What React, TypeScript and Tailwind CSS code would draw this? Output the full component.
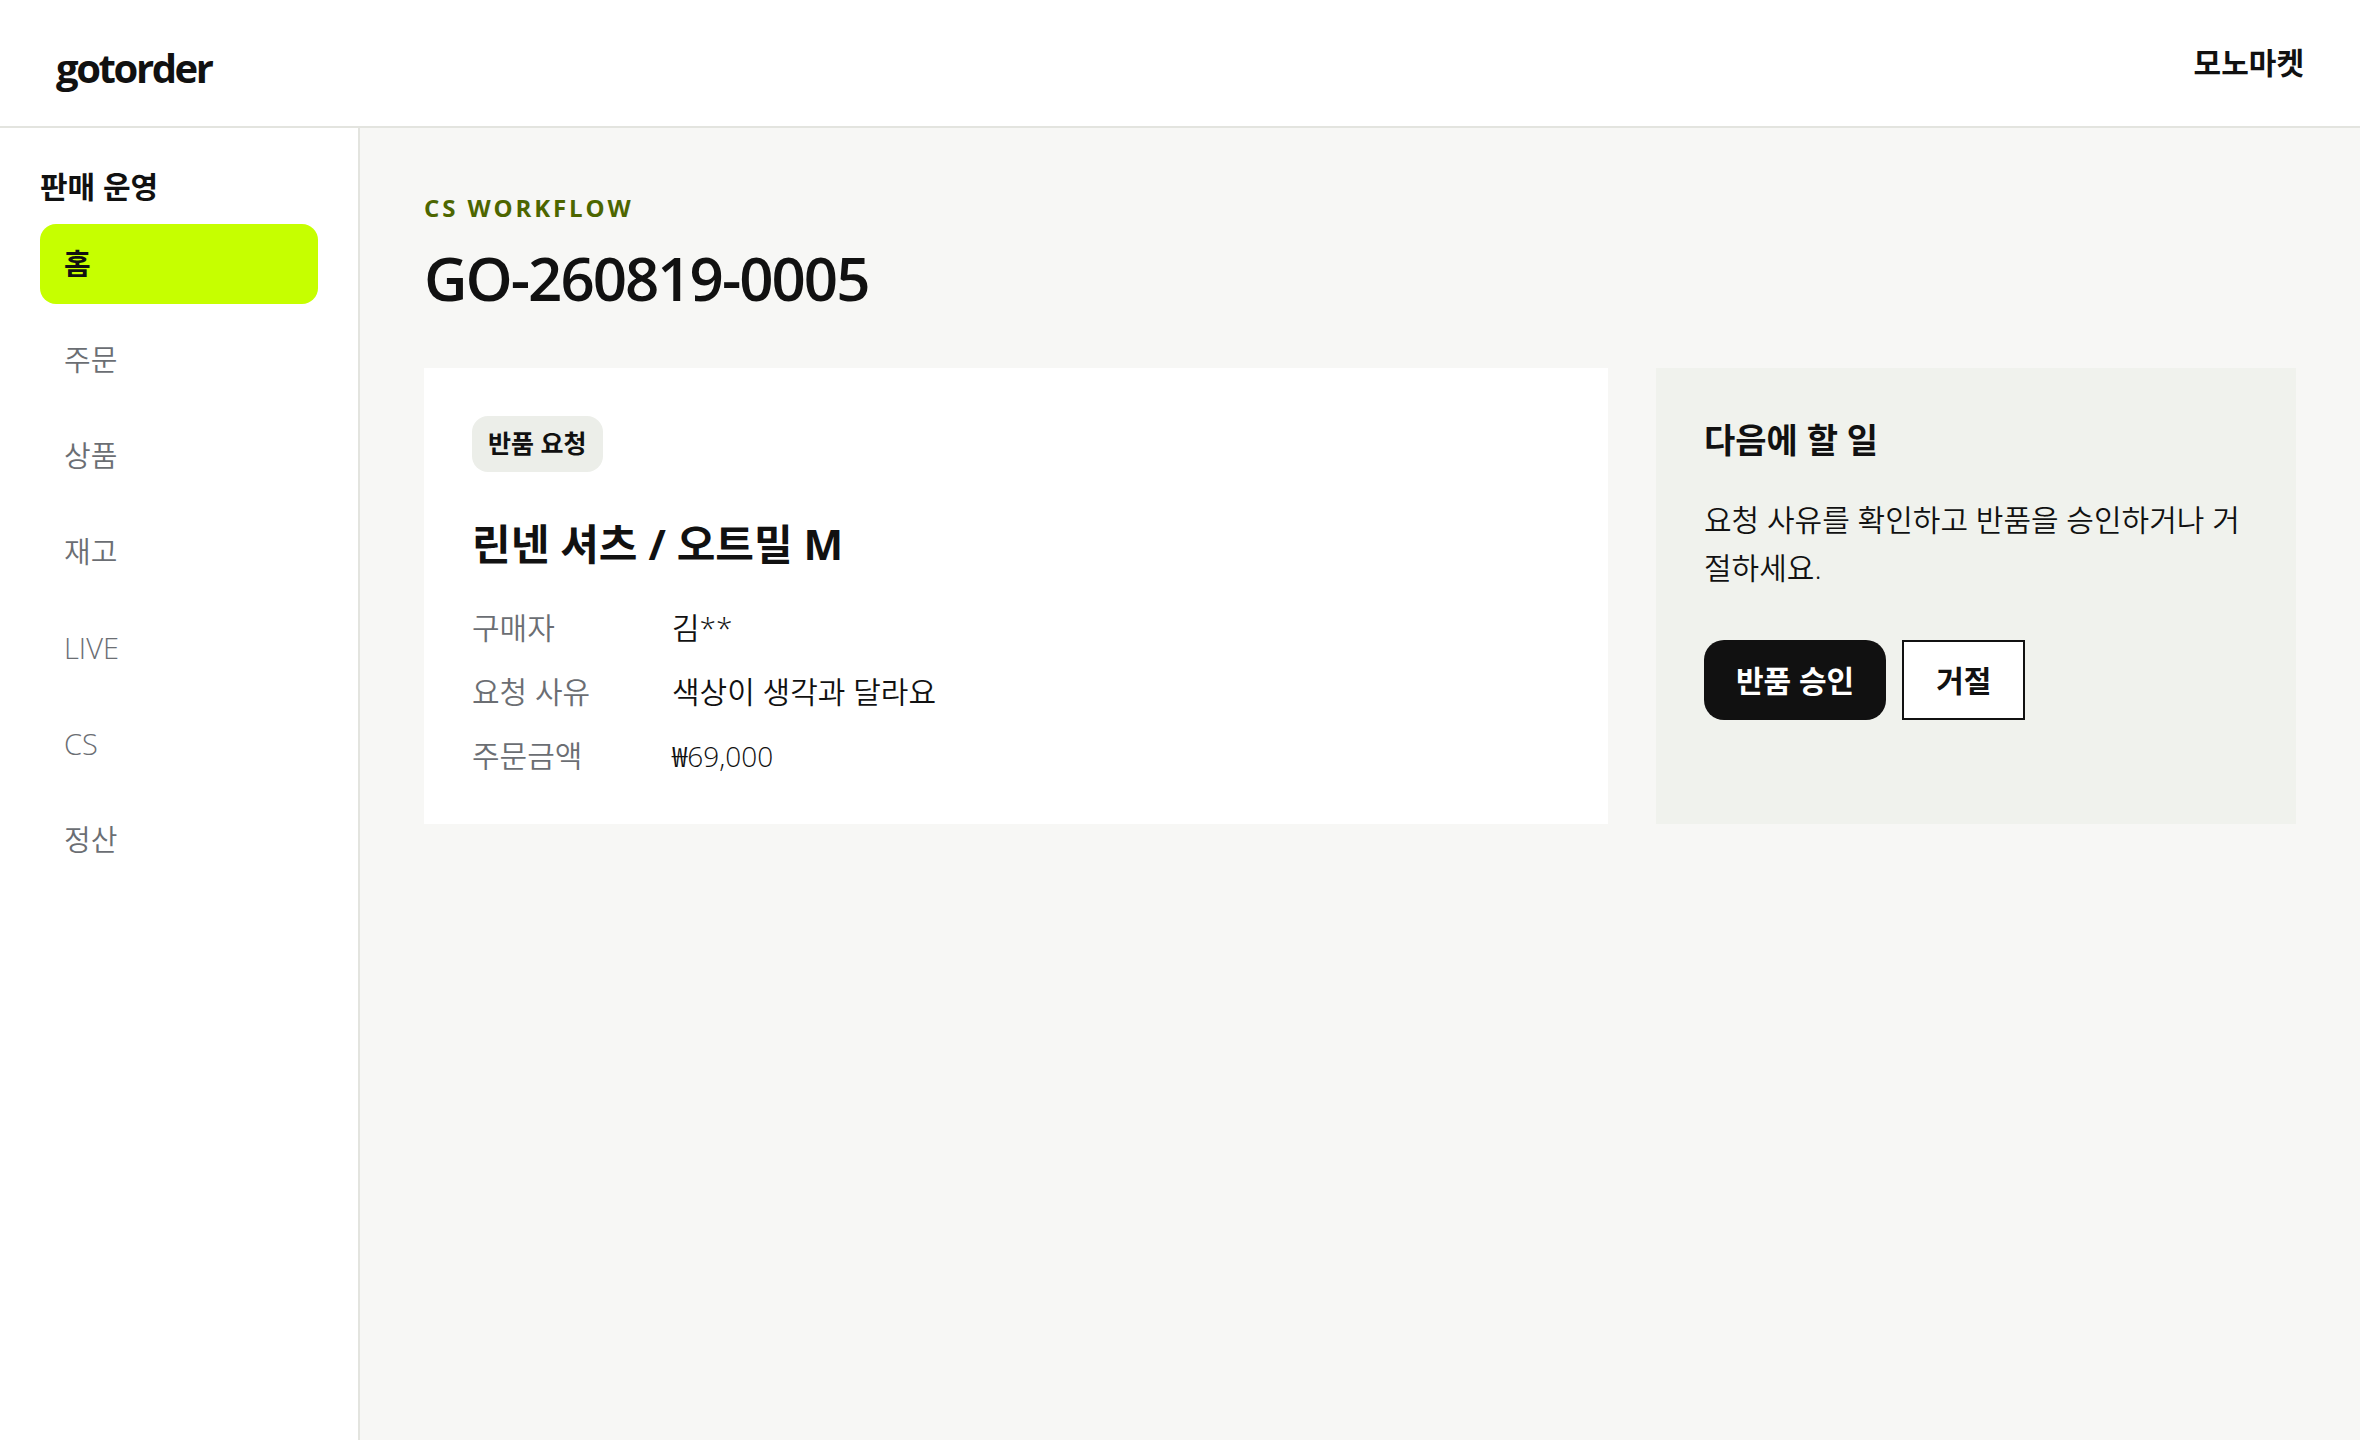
const navItems = ["홈", "주문", "상품", "재고", "LIVE", "CS", "정산"];

const details = [
  { label: "구매자", value: "김**" },
  { label: "요청 사유", value: "색상이 생각과 달라요" },
  { label: "주문금액", value: "₩69,000", numeric: true },
];

function Header() {
  return (
    <header className="flex h-32 items-center justify-between border-b-2 border-[#e3e4df] bg-white px-14">
      <a href="#" className="pt-2.5 text-[40px] leading-12 font-bold tracking-[-0.06em]">
        gotorder
      </a>
      <strong className="text-[30px] leading-10 font-bold">모노마켓</strong>
    </header>
  );
}

function Sidebar() {
  return (
    <aside className="w-[360px] shrink-0 border-r-2 border-[#e3e4df] bg-white px-10 pt-10">
      <strong className="block text-[30px] leading-9.5 font-bold">판매 운영</strong>
      <nav className="mt-4.5 flex flex-col gap-4">
        {navItems.map((item, index) => (
          <a
            key={item}
            href="#"
            aria-current={index === 0 ? "page" : undefined}
            className={
              index === 0
                ? "flex h-20 items-center rounded-2xl bg-[#c6ff00] px-6 text-[29px] leading-10 font-bold"
                : "flex h-20 items-center rounded-2xl px-6 text-[29px] leading-10 font-[350] text-[#6b6e73]"
            }
          >
            {item}
          </a>
        ))}
      </nav>
    </aside>
  );
}

function RequestCard() {
  return (
    <section className="bg-white p-12">
      <span className="inline-flex h-14 items-center rounded-2xl bg-[#eceee9] px-4 text-[25px] font-bold">
        반품 요청
      </span>
      <h2 className="mt-11 text-[42px] leading-14 font-bold">린넨 셔츠 / 오트밀 M</h2>
      <dl className="mt-9 grid grid-cols-[200px_1fr] gap-y-6 text-[30px] leading-10 font-[350]">
        {details.map(({ label, value, numeric }) => (
          <div key={label} className="contents">
            <dt className="text-[#6b6e73]">{label}</dt>
            <dd className={numeric ? "text-[28px]" : undefined}>{value}</dd>
          </div>
        ))}
      </dl>
    </section>
  );
}

function NextSteps() {
  return (
    <aside className="bg-[#f0f2ed] p-12">
      <h2 className="text-[34px] leading-12 font-bold">다음에 할 일</h2>
      <p className="mt-8 text-[30px] leading-12 font-[350]">
        요청 사유를 확인하고 반품을 승인하거나 거절하세요.
      </p>
      <div className="mt-12 flex gap-4">
        <button type="button" className="h-20 rounded-[20px] bg-[#111111] px-8 text-[30px] font-bold text-white">
          반품 승인
        </button>
        <button type="button" className="h-20 border-2 border-[#111111] bg-white px-8 text-[30px] font-bold">
          거절
        </button>
      </div>
    </aside>
  );
}

export default function App() {
  return (
    <div
      lang="ko"
      className="flex min-h-screen flex-col bg-[#f7f7f5] font-['Open_Sans','Noto_Sans_CJK_KR',sans-serif] text-[#111111]"
    >
      <Header />
      <div className="flex flex-1">
        <Sidebar />
        <main className="min-w-0 flex-1 px-16 pt-16">
          <p className="text-2xl leading-8 font-bold tracking-[0.12em] text-[#4d6600]">CS WORKFLOW</p>
          <h1 className="mt-4 text-[60px] leading-19 font-semibold tracking-[-2px]">GO-260819-0005</h1>
          <div className="mt-13 grid grid-cols-[minmax(0,1fr)_640px] gap-12">
            <RequestCard />
            <NextSteps />
          </div>
        </main>
      </div>
    </div>
  );
}
